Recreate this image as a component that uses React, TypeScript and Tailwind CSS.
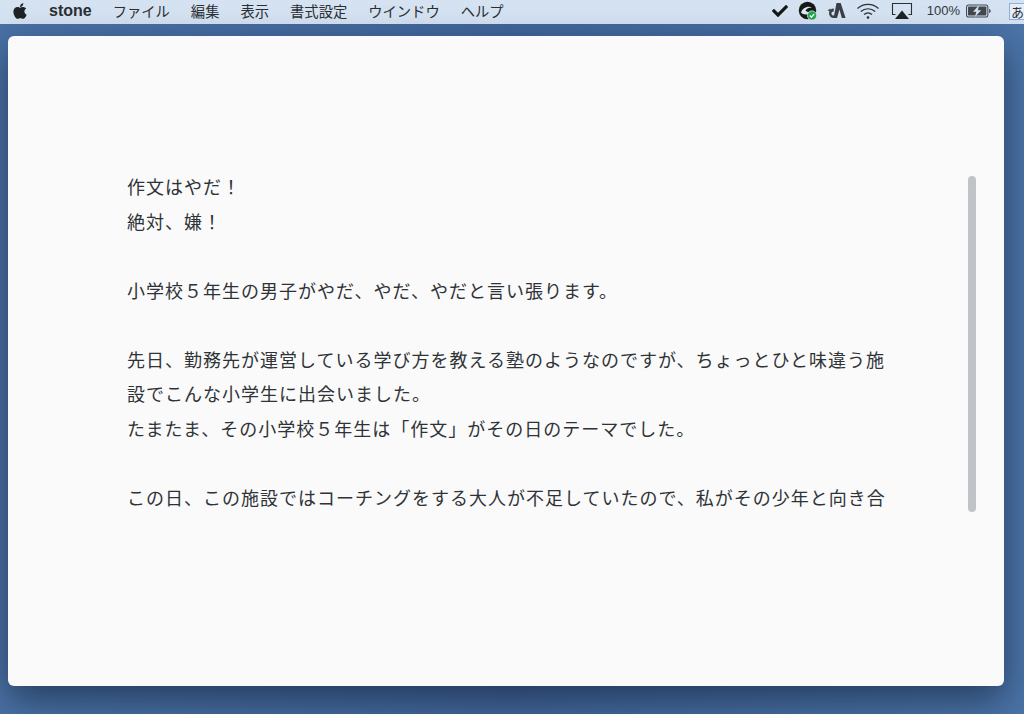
import React from "react";
import { FaApple, FaCheck } from "react-icons/fa";

const menus = ["ファイル", "編集", "表示", "書式設定", "ウインドウ", "ヘルプ"];

const SyncIcon = () => (
  <svg width="20" height="20" viewBox="0 0 20 20">
    <circle cx="9.5" cy="9.5" r="8.7" fill="#16191a" />
    <path d="M3 11.5c1.5-4.5 6.5-7 11-5-3 0-5.5 1-6.5 3.2 2 1.8 4.5 1.8 6.5.3-2 3.5-8 5-11 1.5z" fill="#dfe8f0" />
    <circle cx="14" cy="14.5" r="4.6" fill="#1fa64a" stroke="#d5e2f2" strokeWidth="0.8" />
    <path d="M11.8 14.5l1.6 1.7 2.8-3.2" fill="none" stroke="#fff" strokeWidth="1.3" />
  </svg>
);

const AIcon = () => (
  <svg width="20" height="18" viewBox="0 0 20 18">
    <path d="M10.5 1h4.2L19.6 16h-3.8L13.5 7.5 11 16H7.6z" fill="#3a4146" />
    <path d="M7.8 6.5a4.8 4.8 0 1 0 0 9.6l1-3.2a2 2 0 1 1-1-3.4z" fill="#3a4146" />
    <path d="M1.5 8.5l3-2 .5 3z" fill="#3a4146" />
  </svg>
);

const WifiIcon = () => (
  <svg width="24" height="18" viewBox="0 0 24 18" fill="none" stroke="#2b2f33" strokeWidth="1.2">
    <path d="M1.5 6.5C7.5 1 16.5 1 22.5 6.5" />
    <path d="M4.8 9.5c4.2-3.7 10.2-3.7 14.4 0" />
    <path d="M8 12.5c2.4-2 5.6-2 8 0" />
    <circle cx="12" cy="15.5" r="1.3" fill="#2b2f33" stroke="none" />
  </svg>
);

const AirplayIcon = () => (
  <svg width="22" height="18" viewBox="0 0 22 18" fill="none">
    <path d="M4.5 12.5H1.5V1.5h19v11h-3" stroke="#2b2f33" strokeWidth="1.1" />
    <path d="M11 8.5l7 8.5H4z" fill="#1f2326" />
  </svg>
);

const BatteryIcon = () => (
  <svg width="25" height="14" viewBox="0 0 27 14">
    <rect x="0.6" y="0.6" width="23" height="12.8" rx="2.2" fill="none" stroke="#43484d" strokeWidth="1.1" />
    <rect x="2.2" y="2.2" width="19.8" height="9.6" rx="0.8" fill="#43484d" />
    <path d="M25 4.8c1.2.3 1.6 1 1.6 2.2s-.4 1.9-1.6 2.2z" fill="#43484d" />
    <path d="M14.2 0.5 7.6 7.8h3.6L9.6 13.5l6.8-7.4h-3.6z" fill="#d5e2f2" />
  </svg>
);

export default function App() {
  return (
    <div className="flex h-[714px] w-[1024px] flex-col overflow-hidden bg-gradient-to-r from-[#4a72a6] via-[#42669a] to-[#4b74a8] font-['Noto_Sans_CJK_JP','Liberation_Sans',sans-serif]">
      <header className="flex h-6 shrink-0 items-center bg-[#d5e2f2] pb-[2px] pl-3 text-[14.3px] text-[#2b2f33]">
        <FaApple className="h-[18px] w-[16px] text-[#1f2326]" />
        <span className="ml-[21px] font-['Liberation_Sans',sans-serif] text-[16px] font-bold">stone</span>
        <nav className="ml-[21px] flex gap-[21px]">
          {menus.map((m) => (
            <span key={m}>{m}</span>
          ))}
        </nav>
        <div className="ml-auto flex items-center">
          <FaCheck className="h-[16px] w-[18px] text-[#15181a]" />
          <div className="ml-[9px]"><SyncIcon /></div>
          <div className="ml-[8px]"><AIcon /></div>
          <div className="ml-[10px]"><WifiIcon /></div>
          <div className="ml-[11px]"><AirplayIcon /></div>
          <span className="ml-[14px] font-['Liberation_Sans',sans-serif] text-[13px] text-[#33383c]">100%</span>
          <div className="ml-[6px]"><BatteryIcon /></div>
          <div className="ml-[18px] flex h-[17px] w-[15px] justify-start overflow-hidden border-y border-l border-[#8fb0dc] bg-[#e6eefa] pl-[1px] text-[13px] leading-[15px]">
            あ
          </div>
        </div>
      </header>

      <main className="mt-3 ml-2 flex h-[650px] w-[996px] overflow-hidden rounded-md bg-[#fafafa] shadow-[0_14px_36px_rgba(10,20,40,0.55)]">
        <article className="mt-[133px] ml-[119px] w-[760px] shrink-0 text-[18px] leading-[34.5px] tracking-[1px] text-[#2f3337]">
          <p>作文はやだ！</p>
          <p>絶対、嫌！</p>
          <br />
          <p>小学校５年生の男子がやだ、やだ、やだと言い張ります。</p>
          <br />
          <p>先日、勤務先が運営している学び方を教える塾のようなのですが、ちょっとひと味違う施設でこんな小学生に出会いました。</p>
          <p>たまたま、その小学校５年生は「作文」がその日のテーマでした。</p>
          <br />
          <p>この日、この施設ではコーチングをする大人が不足していたので、私がその少年と向き合</p>
        </article>
        <div className="mt-[140px] ml-[81px] h-[336px] w-2 rounded-full bg-[#c0c4c8]" />
      </main>
    </div>
  );
}
